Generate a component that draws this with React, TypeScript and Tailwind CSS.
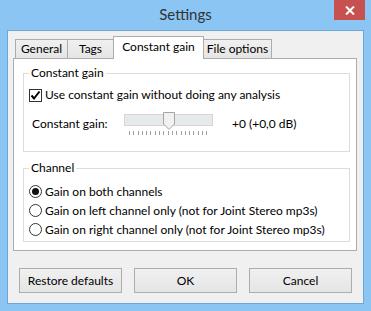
import React, { useState } from "react";

const font = { fontFamily: 'Lato, "Noto Sans", sans-serif' };

const Check = ({ checked }: { checked: boolean }) => (
  <span className="flex shrink-0 items-center justify-center w-[13px] h-[13px] border border-[#333333] bg-white">
    {checked && (
      <svg width="11" height="11" viewBox="0 0 11 11">
        <path d="M1.5 5.5 L4 8.5 L9.5 1.5" fill="none" stroke="#000" strokeWidth="2" />
      </svg>
    )}
  </span>
);

const Radio = ({ on }: { on: boolean }) => (
  <span className="flex shrink-0 items-center justify-center w-[13px] h-[13px] rounded-full border border-[#333333] bg-white">
    {on && <span className="w-[7px] h-[7px] rounded-full bg-[#111]" />}
  </span>
);

const Slider = () => {
  const ticks = Array.from({ length: 19 });
  return (
    <div className="relative w-[89px] h-[24px] shrink-0">
      <div className="mt-[2px] h-[12px] border border-[#d6d6d6] bg-[#e7eaea]" />
      <svg className="absolute left-[39px] top-0" width="12" height="18" viewBox="0 0 12 18">
        <path d="M0.5 0.5 H11.5 V12 L6 17.5 L0.5 12 Z" fill="#f1f1f1" stroke="#a6a6a6" />
      </svg>
      <div className="mt-[5px] ml-[5px] flex gap-[3.3px]">
        {ticks.map((_, i) => (
          <span key={i} className="w-px h-[4px] bg-[#a0a0a0]" />
        ))}
      </div>
    </div>
  );
};

const tabs = ["General", "Tags", "Constant gain", "File options"];
const tabWidths = ["w-[53px]", "w-[47px]", "w-[91px]", "w-[69px]"];

const App: React.FC = () => {
  const [useGain, setUseGain] = useState(true);
  const [channel, setChannel] = useState(0);
  const channels = [
    "Gain on both channels",
    "Gain on left channel only (not for Joint Stereo mp3s)",
    "Gain on right channel only (not for Joint Stereo mp3s)",
  ];

  return (
    <div
      className="w-[371px] h-[311px] bg-[#8ac5f4] px-[7px] pb-[7px] text-[12px] text-black whitespace-nowrap"
      style={font}
    >
      {/* title bar */}
      <div className="relative flex items-center justify-center h-[30px]">
        <span className="text-[15px] text-[#333] pb-[2px]">Settings</span>
        <button className="absolute right-[-1px] top-0 flex items-center justify-center w-[31px] h-[20px] bg-[#c75050]">
          <svg width="10" height="9" viewBox="0 0 10 9">
            <path d="M1 0.5 L9 8.5 M9 0.5 L1 8.5" stroke="#fff" strokeWidth="2" />
          </svg>
        </button>
      </div>

      {/* client */}
      <div className="h-[274px] border border-[#6fa6d6] bg-[#f0f0f0] pl-[5px] pr-[6px]">
        <div className="flex items-end h-[27px] pl-[2px]">
          {tabs.map((t, i) =>
            i === 2 ? (
              <div
                key={t}
                className={`${tabWidths[i]} relative z-10 -ml-px -mb-px h-[23px] flex items-center justify-center border border-b-0 border-[#acacac] bg-white pb-[3px]`}
              >
                {t}
              </div>
            ) : (
              <div
                key={t}
                className={`${tabWidths[i]} ${i > 0 ? "-ml-px" : ""} h-[19px] flex items-center justify-center border border-b-0 border-[#acacac] bg-gradient-to-b from-[#f0f0f0] to-[#e5e5e5]`}
              >
                {t}
              </div>
            )
          )}
        </div>

        <div className="h-[193px] border border-[#acacac] bg-white pt-[6px] pl-[9px] pr-[6px]">
          <fieldset className="h-[87px] border border-[#dcdcdc] px-[5px]">
            <legend className="px-[2px] leading-[16px]">Constant gain</legend>
            <label className="flex items-center gap-[3px] mt-[7px] h-[14px]" onClick={() => setUseGain(!useGain)}>
              <Check checked={useGain} />
              <span>Use constant gain without doing any analysis</span>
            </label>
            <div className="flex items-start mt-[10px]">
              <span className="w-[95px] pl-[3px] mt-[3px]">Constant gain:</span>
              <Slider />
              <span className="ml-[19px] mt-[3px]">+0 (+0,0 dB)</span>
            </div>
          </fieldset>

          <fieldset className="mt-[8px] h-[82px] border border-[#dcdcdc] px-[5px]">
            <legend className="px-[2px] leading-[16px]">Channel</legend>
            <div className="flex flex-col mt-[6px]">
              {channels.map((c, i) => (
                <label
                  key={c}
                  className="flex items-center gap-[3px] h-[19px]"
                  onClick={() => setChannel(i)}
                >
                  <Radio on={channel === i} />
                  <span>{c}</span>
                </label>
              ))}
            </div>
          </fieldset>
        </div>

        <div className="flex gap-[12px] pl-[6px] mt-[17px]">
          {["Restore defaults", "OK", "Cancel"].map((b) => (
            <button
              key={b}
              className="w-[103px] h-[25px] border border-[#adadad] bg-gradient-to-b from-[#f0f0f0] to-[#e5e5e5] text-[12px]"
            >
              {b}
            </button>
          ))}
        </div>
      </div>
    </div>
  );
};

export default App;
